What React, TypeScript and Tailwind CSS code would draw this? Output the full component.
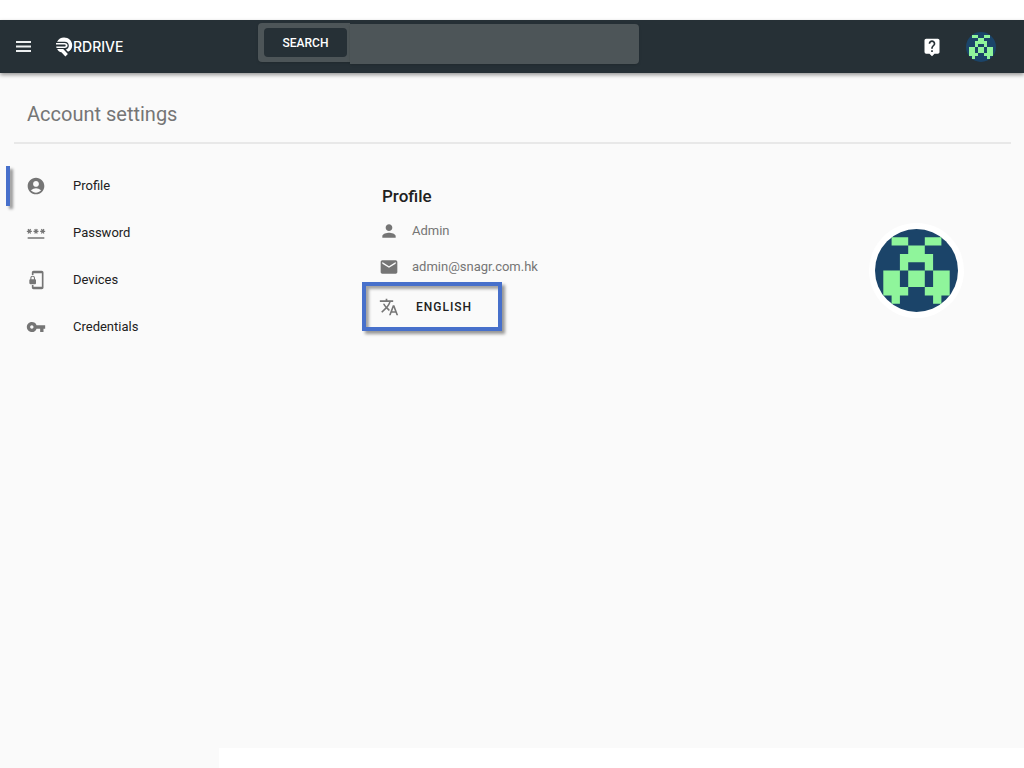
import { useState } from "react"
import type { IconType } from "react-icons"
import {
  MdAccountCircle,
  MdEmail,
  MdLiveHelp,
  MdPassword,
  MdPerson,
  MdPhonelinkLock,
  MdTranslate,
  MdVpnKey,
} from "react-icons/md"

const NAV_ITEMS: { label: string; icon: IconType }[] = [
  { label: "Profile", icon: MdAccountCircle },
  { label: "Password", icon: MdPassword },
  { label: "Devices", icon: MdPhonelinkLock },
  { label: "Credentials", icon: MdVpnKey },
]

// 8x8 identicon, "#" is a filled cell
const IDENTICON = [
  ".##..##.",
  "...##...",
  "..####..",
  "..#..#..",
  "##.##.##",
  "##.##.##",
  "###..###",
  ".#....#.",
]

const IDENTICON_PATH = IDENTICON.flatMap((row, y) =>
  row.split("").map((cell, x) => (cell === "#" ? `M${x - 4} ${y - 4}h1v1h-1z` : ""))
).join("")

function Avatar({ className }: { className: string }) {
  return (
    <svg viewBox="-5 -5 10 10" className={className} role="img" aria-label="Avatar">
      <circle r="5" fill="#1b4469" />
      <path d={IDENTICON_PATH} fill="#8ff59b" />
    </svg>
  )
}

function MenuIcon() {
  return (
    <svg viewBox="0 0 15 11" className="h-[11px] w-[15px]" stroke="currentColor" strokeWidth="1.8" aria-hidden="true">
      <path d="M0 1h15M0 5.500h15M0 10h15" />
    </svg>
  )
}

function Logo() {
  return (
    <a href="#" className="flex items-center text-white">
      <svg viewBox="0 0 17 20" className="h-5 w-[17px]" fill="currentColor" aria-hidden="true">
        <path d="M1 4.700C2.500 2 5 .5 8 .5c4.600 0 8.200 3.300 8.200 7.700 0 3.200-1.600 5.400-4.200 6.500l-2.200-2.300c2-.5 3-1.800 3-3.700 0-2.500-1.600-4-4.100-4z" />
        <path d="M0 6h8.700c1.800 0 2.900.9 2.900 2.500S10.500 11 8.700 11H.5L.2 9.600h8.300c.8 0 1.200-.4 1.200-1.100s-.4-1.100-1.200-1.100H0z" />
        <path d="M1.200 12h6l4.700 5-2.500 2.400-4-4.100C3.500 15.200 2 14 1.200 12z" />
      </svg>
      <span className="font-[Inter,sans-serif] text-[14px] leading-5 font-medium">RDRIVE</span>
    </a>
  )
}

export default function App() {
  const [active, setActive] = useState("Profile")
  const [query, setQuery] = useState("")

  return (
    <div className="flex min-h-screen flex-col bg-[#fafafa] font-[Roboto,sans-serif] text-[#212121]">
      <div className="h-5 bg-white" />
      <header className="relative flex h-[53px] items-center bg-[#263036] pr-7 pl-3 shadow-[0_2px_4px_rgba(0,0,0,0.4)]">
        <div className="flex w-[246px] items-center gap-[21px]">
          <button aria-label="Menu" className="p-1 text-[#eceff0]">
            <MenuIcon />
          </button>
          <Logo />
        </div>
        <form className="flex items-start self-start pt-[3px]" onSubmit={e => e.preventDefault()}>
          <div className="h-[39px] w-[92px] rounded-l bg-[#4d5558] px-1.5 py-[5px] shadow-sm">
            <button className="h-[29px] w-[83px] rounded bg-[#263036] text-[12px] leading-4 font-medium text-white">
              SEARCH
            </button>
          </div>
          <input
            aria-label="Search"
            value={query}
            onChange={e => setQuery(e.target.value)}
            className="mt-px h-10 w-[289px] rounded-r bg-[#4d5558] px-3 text-sm text-white shadow-sm outline-none"
          />
        </form>
        <div className="ml-auto flex items-center gap-6">
          <button aria-label="Help" className="text-white">
            <MdLiveHelp className="size-5" />
          </button>
          <button aria-label="Account">
            <Avatar className="size-[30px]" />
          </button>
        </div>
      </header>

      <main className="flex-1 pr-[13px] pl-3.5">
        <h1 className="border-b-2 border-[#e8e8e8] px-[13px] pt-[27px] pb-[14px] text-[20px] leading-7 text-[#757575]">
          Account settings
        </h1>
        <div className="flex items-start pt-[18px]">
          <nav className="-ml-2 w-[356px]">
            {NAV_ITEMS.map(({ label, icon: Icon }) => (
              <button
                key={label}
                onClick={() => setActive(label)}
                className="flex h-[47px] w-full items-center text-left text-[13px] leading-5"
              >
                <span
                  className={
                    active === label
                      ? "h-10 w-1 bg-[#4770cb] shadow-[3px_3px_3px_rgba(0,0,0,0.4)]"
                      : "h-10 w-1"
                  }
                />
                <Icon className="ml-4 size-5 text-[#757575]" />
                <span className="ml-[27px]">{label}</span>
              </button>
            ))}
          </nav>

          <section className="flex-1 pt-[22px]">
            <h2 className="pl-5 text-[17px] leading-6 font-medium">Profile</h2>
            <div className="mt-[13px] flex items-center gap-[13px] pl-[17px] text-[13px] leading-5 text-[#757575]">
              <MdPerson className="size-5" />
              Admin
            </div>
            <div className="mt-4 flex items-center gap-[13px] pl-[17px] text-[13px] leading-5 text-[#757575]">
              <MdEmail className="size-5" />
              admin@snagr.com.hk
            </div>
            <button className="mt-[5px] flex h-[49px] w-[140px] items-center gap-[17px] border-4 border-[#4770cb] pl-[13px] text-[12px] leading-5 font-medium tracking-[1px] shadow-[3px_3px_3px_rgba(0,0,0,0.4),inset_3px_3px_3px_rgba(0,0,0,0.35)]">
              <MdTranslate className="size-5 text-[#757575]" />
              ENGLISH
            </button>
          </section>

          <div className="mt-[61px] mr-[47px] rounded-full bg-white p-1.5">
            <Avatar className="size-[83px]" />
          </div>
        </div>
      </main>

      <footer className="flex h-5">
        <div className="w-[219px]" />
        <div className="flex-1 bg-white" />
      </footer>
    </div>
  )
}
